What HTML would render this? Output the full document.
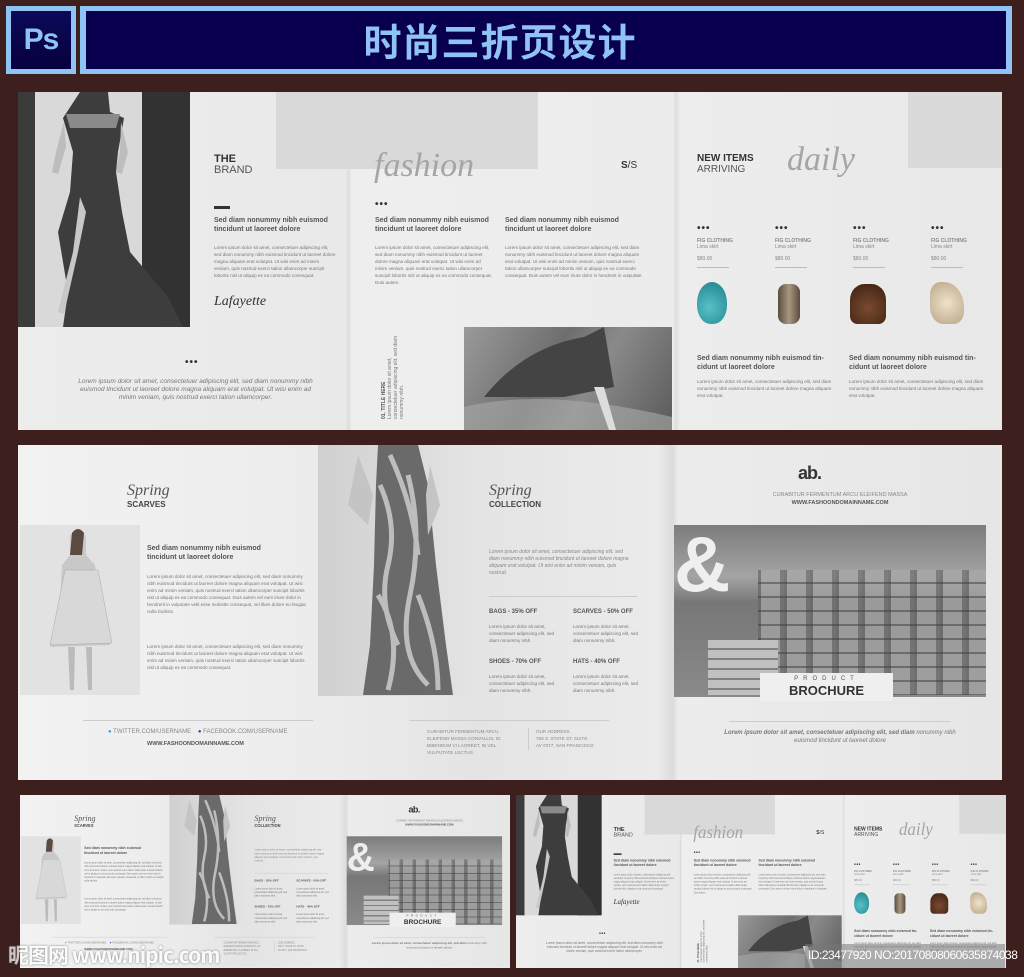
<!DOCTYPE html>
<html><head><meta charset="utf-8">
<style>
*{margin:0;padding:0;box-sizing:border-box}
body{width:1024px;height:977px;background:#3d1f1d;position:relative;overflow:hidden;font-family:"Liberation Sans","Noto Sans CJK SC",sans-serif;color:#444}
.a{position:absolute}
.sp{position:absolute;overflow:hidden}
.h{font-weight:bold;font-size:7px;line-height:9px;color:#555}
.b{font-size:4.6px;line-height:7px;color:#777}
.dots{font-size:10px;letter-spacing:1px;color:#333;font-weight:bold;line-height:6px}
.scr{font-family:"Liberation Serif",serif;font-style:italic;color:#999}
.it{font-style:italic;font-size:6.5px;line-height:8px;color:#777;text-align:center}
.sm{font-size:5px;line-height:7px;color:#888}
</style></head><body>

<div class="a" style="left:6px;top:6px;width:70px;height:68px;background:#8fc3f4;"></div>
<div class="a" style="left:11px;top:11px;width:60px;height:58px;background:linear-gradient(#0b0a5a,#08003e);color:#8fc3f4;font-weight:bold;font-size:30px;line-height:58px;text-align:center;letter-spacing:-1px">Ps</div>
<div class="a" style="left:80px;top:6px;width:932px;height:68px;background:#8fc3f4"></div>
<div class="a" style="left:86px;top:11px;width:920px;height:58px;background:#08004f;color:#8fc3f4;font-family:'Noto Sans CJK SC',sans-serif;font-weight:bold;font-size:38px;line-height:58px;text-align:center;letter-spacing:1px;padding-right:92px">时尚三折页设计</div>

<div id="s1" class="sp" style="left:18px;top:92px;width:984px;height:338px;background:linear-gradient(90deg,#ededed 0,#e9e9e9 328px,#dcdcdc 330px,#eeeeee 334px,#ececec 655px,#dedede 658px,#ededed 662px,#e8e8e8 984px)">
 <div class="a" style="left:0;top:0;width:172px;height:235px;background:#d9d9d9"></div>
 <div class="a" style="left:0;top:0;width:17px;height:235px;background:#3b3b3b"></div>
 <div class="a" style="left:124px;top:0;width:48px;height:235px;background:#323232"></div>
 <svg class="a" style="left:0;top:0" width="172" height="235" viewBox="0 0 172 235">
  <path d="M62 0 L90 0 L92 20 L106 26 L100 60 L98 80 L104 120 L112 160 L150 205 L165 235 L45 235 L50 200 L40 140 L52 100 L55 60 L45 26 Z" fill="#3d3d3d"/>
  <path d="M48 22 L102 22 L98 36 L52 36 Z" fill="#8a8a8a"/>
  <path d="M62 105 L55 160 L40 220 L46 222 L60 160 L68 120 Z" fill="#c8c8c8"/>
  <path d="M46 30 L38 60 L34 80 L40 82 L48 55 Z" fill="#bdbdbd"/>
  <path d="M103 30 L110 60 L104 82 L98 80 L102 58 Z" fill="#bdbdbd"/>
 </svg>
 <div class="a" style="left:258px;top:0;width:262px;height:77px;background:#d9d9d9"></div>
 <div class="a" style="left:196px;top:62px;font-weight:bold;font-size:11px;line-height:11px;color:#333">THE</div>
 <div class="a" style="left:196px;top:73px;font-size:11px;line-height:11px;color:#555">BRAND</div>
 <div class="a" style="left:196px;top:114px;width:16px;height:3px;background:#333"></div>
 <div class="a h" style="left:196px;top:124px;width:130px">Sed diam nonummy nibh euismod tincidunt ut laoreet dolore</div>
 <div class="a b" style="left:196px;top:152px;width:122px">Lorem ipsum dolor sit amet, consectetuer adipiscing elit, sed diam nonummy nibh euismod tincidunt ut laoreet dolore magna aliquam erat volutpat. Ut wisi enim ad minim veniam, quis nostrud exerci tation ullamcorper suscipit lobortis nisl ut aliquip ex ea commodo consequat.</div>
 <div class="a scr" style="left:196px;top:202px;font-size:14px;color:#333">Lafayette</div>
 <div class="a dots" style="left:167px;top:268px">•••</div>
 <div class="a it" style="left:55px;top:286px;width:245px">Lorem ipsum dolor sit amet, consectetuer adipiscing elit, sed diam nonummy nibh euismod tincidunt ut laoreet dolore magna aliquam erat volutpat. Ut wisi enim ad minim veniam, quis nostrud exerci tation ullamcorper.</div>

 <div class="a scr" style="left:356px;top:54px;font-size:34px;line-height:40px;color:#a5a5a5">fashion</div>
 <div class="a" style="left:603px;top:68px;font-size:10px;color:#333"><b>S</b>/S</div>
 <div class="a dots" style="left:357px;top:110px">•••</div>
 <div class="a h" style="left:357px;top:124px;width:128px">Sed diam nonummy nibh euismod tincidunt ut laoreet dolore</div>
 <div class="a h" style="left:487px;top:124px;width:128px">Sed diam nonummy nibh euismod tincidunt ut laoreet dolore</div>
 <div class="a b" style="left:357px;top:152px;width:118px">Lorem ipsum dolor sit amet, consectetuer adipiscing elit, sed diam nonummy nibh euismod tincidunt ut laoreet dolore magna aliquam erat volutpat. Ut wisi enim ad minim veniam, quis nostrud exerci tation ullamcorper suscipit lobortis nisl ut aliquip ex ea commodo consequat. Duis autem.</div>
 <div class="a b" style="left:487px;top:152px;width:140px">Lorem ipsum dolor sit amet, consectetuer adipiscing elit, sed diam nonummy nibh euismod tincidunt ut laoreet dolore magna aliquam erat volutpat. Ut wisi enim ad minim veniam, quis nostrud exerci tation ullamcorper suscipit lobortis nisl ut aliquip ex ea commodo consequat. Duis autem vel eum iriure dolor in hendrerit in vulputate.</div>
 <div class="a" style="left:330px;top:270px;width:90px;transform:rotate(-90deg);transform-origin:center;font-size:5px;line-height:6px;color:#777"><b style="color:#555">01. TITLE HERE</b><br>Lorem ipsum dolor sit amet, consectetuer adipiscing elit, sed diam nonummy nibh.</div>
 <div class="a" style="left:446px;top:235px;width:208px;height:103px;background:linear-gradient(120deg,#9a9a9a,#6e6e6e 40%,#8a8a8a 60%,#5a5a5a)"></div>
 <svg class="a" style="left:446px;top:235px" width="208" height="103"><path d="M20 70 Q60 20 120 10 L140 0 L150 60 L100 70 Z" fill="#444"/><path d="M0 80 Q80 60 208 90 L208 103 L0 103Z" fill="#aaa" opacity=".6"/><path d="M130 60 L145 103 L152 103 L140 60Z" fill="#ddd"/></svg>

 <div class="a" style="left:890px;top:0;width:94px;height:76px;background:#dadada"></div>
 <div class="a" style="left:679px;top:62px;font-weight:bold;font-size:10px;line-height:10px;color:#333">NEW ITEMS</div>
 <div class="a" style="left:679px;top:73px;font-size:10px;line-height:10px;color:#555">ARRIVING</div>
 <div class="a scr" style="left:769px;top:48px;font-size:34px;line-height:40px;color:#a5a5a5">daily</div>
 <div class="a" style="left:679px;top:134px;width:305px">
  <div class="a dots" style="left:0">•••</div><div class="a dots" style="left:78px">•••</div><div class="a dots" style="left:156px">•••</div><div class="a dots" style="left:234px">•••</div>
 </div>
 <div class="a sm" style="left:679px;top:146px;line-height:6px"><b>FIG CLOTHING</b><br>Lima skirt<br><br>$80.00</div>
 <div class="a sm" style="left:757px;top:146px;line-height:6px"><b>FIG CLOTHING</b><br>Lima skirt<br><br>$80.00</div>
 <div class="a sm" style="left:835px;top:146px;line-height:6px"><b>FIG CLOTHING</b><br>Lima skirt<br><br>$80.00</div>
 <div class="a sm" style="left:913px;top:146px;line-height:6px"><b>FIG CLOTHING</b><br>Lima skirt<br><br>$80.00</div>
 <div class="a" style="left:679px;top:175px;width:32px;height:1px;background:#bbb"></div>
 <div class="a" style="left:757px;top:175px;width:32px;height:1px;background:#bbb"></div>
 <div class="a" style="left:835px;top:175px;width:32px;height:1px;background:#bbb"></div>
 <div class="a" style="left:913px;top:175px;width:32px;height:1px;background:#bbb"></div>
 <div class="a" style="left:679px;top:190px;width:30px;height:42px;border-radius:50% 50% 45% 45%;background:radial-gradient(circle at 40% 60%,#5ac0c8,#1a7f88)"></div>
 <div class="a" style="left:760px;top:192px;width:22px;height:40px;border-radius:8px;background:linear-gradient(90deg,#5a4c40,#a89880 50%,#5a4c40)"></div>
 <div class="a" style="left:832px;top:192px;width:36px;height:40px;border-radius:40% 40% 20% 20%;background:radial-gradient(circle at 50% 60%,#7a4a30,#3a2010)"></div>
 <div class="a" style="left:912px;top:190px;width:34px;height:42px;border-radius:30% 60% 30% 40%;background:radial-gradient(circle at 50% 50%,#f0e2c8,#b8a588)"></div>
 <div class="a h" style="left:679px;top:262px;width:145px">Sed diam nonummy nibh euismod tin-cidunt ut laoreet dolore</div>
 <div class="a h" style="left:831px;top:262px;width:145px">Sed diam nonummy nibh euismod tin-cidunt ut laoreet dolore</div>
 <div class="a b" style="left:679px;top:286px;width:140px">Lorem ipsum dolor sit amet, consectetuer adipiscing elit, sed diam nonummy nibh euismod tincidunt ut laoreet dolore magna aliquam erat volutpat.</div>
 <div class="a b" style="left:831px;top:286px;width:140px">Lorem ipsum dolor sit amet, consectetuer adipiscing elit, sed diam nonummy nibh euismod tincidunt ut laoreet dolore magna aliquam erat volutpat.</div>
</div>

<div id="s2" class="sp" style="left:18px;top:445px;width:984px;height:335px;background:linear-gradient(90deg,#f2f2f2 0,#ececec 300px,#e4e4e4 457px,#ebebeb 640px,#dcdcdc 655px,#ececec 660px,#e6e6e6 984px)">
 <div class="a" style="left:2px;top:80px;width:120px;height:170px;background:#e2e2e2"></div>
 <svg class="a" style="left:2px;top:80px" width="120" height="170"><path d="M50 10 Q60 0 66 12 L66 30 L75 40 L80 80 L90 120 L30 122 L40 80 L42 40 L50 30Z" fill="#c8c8c8"/><path d="M45 45 L78 45 L92 118 L30 120 Z" fill="#d8d8d8" stroke="#aaa" stroke-width=".5"/><path d="M52 8 Q58 0 64 8 L62 30 L50 30Z" fill="#5a4a42"/><path d="M48 122 L50 165 L54 165 L55 122Z M66 122 L68 165 L72 165 L72 122Z" fill="#bbb"/></svg>
 <div class="a scr" style="left:109px;top:38px;font-size:16px;line-height:16px;color:#555">Spring</div>
 <div class="a" style="left:109px;top:55px;font-size:8px;font-weight:bold;color:#444">SCARVES</div>
 <div class="a h" style="left:129px;top:99px;width:140px">Sed diam nonummy nibh euismod tincidunt ut laoreet dolore</div>
 <div class="a b" style="left:129px;top:128px;width:160px">Lorem ipsum dolor sit amet, consectetuer adipiscing elit, sed diam nonummy nibh euismod tincidunt ut laoreet dolore magna aliquam erat volutpat. Ut wisi enim ad minim veniam, quis nostrud exerci tation ullamcorper suscipit lobortis nisl ut aliquip ex ea commodo consequat. Duis autem vel eum iriure dolor in hendrerit in vulputate velit esse molestie consequat, vel illum dolore eu feugiat nulla facilisis.</div>
 <div class="a b" style="left:129px;top:198px;width:160px">Lorem ipsum dolor sit amet, consectetuer adipiscing elit, sed diam nonummy nibh euismod tincidunt ut laoreet dolore magna aliquam erat volutpat. Ut wisi enim ad minim veniam, quis nostrud exerci tation ullamcorper suscipit lobortis nisl ut aliquip ex ea commodo consequat.</div>
 <div class="a" style="left:65px;top:275px;width:230px;height:1px;background:#ccc"></div>
 <div class="a sm" style="left:90px;top:284px;font-size:6px"><span style="color:#29a9e0">●</span> TWITTER.COM/USERNAME &nbsp;&nbsp;&nbsp;<span style="color:#2b4f9a">●</span> FACEBOOK.COM/USERNAME</div>
 <div class="a" style="left:129px;top:296px;font-size:5.5px;font-weight:bold;color:#555">WWW.FASHOONDOMAINNAME.COM</div>

 <div class="a" style="left:300px;top:0;width:157px;height:251px;background:linear-gradient(90deg,#d0d0d0,#e4e4e4)"></div>
 <svg class="a" style="left:300px;top:0" width="157" height="251"><path d="M60 0 L100 0 L110 40 L118 120 L128 200 L135 250 L45 250 L52 200 L56 120 L58 40Z" fill="#6a6a6a"/><path d="M62 40 Q80 80 70 120 T80 200 M90 30 Q105 90 92 150 T110 240 M72 10 Q95 60 100 110 M60 150 Q85 190 70 245 M100 150 Q120 200 120 245" stroke="#bdbdbd" stroke-width="5" fill="none"/><path d="M40 10 L30 60 L50 80 L55 50Z M112 20 L122 60 L110 90 L108 50Z" fill="#c4c4c4"/></svg>
 <div class="a scr" style="left:471px;top:38px;font-size:16px;line-height:16px;color:#555">Spring</div>
 <div class="a" style="left:471px;top:55px;font-size:8px;font-weight:bold;color:#444">COLLECTION</div>
 <div class="a" style="left:471px;top:104px;width:145px;font-style:italic;font-size:5px;line-height:7px;color:#888">Lorem ipsum dolor sit amet, consectetuer adipiscing elit, sed diam nonummy nibh euismod tincidunt ut laoreet dolore magna aliquam erat volutpat. Ut wisi enim ad minim veniam, quis nostrud.</div>
 <div class="a" style="left:471px;top:151px;width:148px;height:1px;background:#ccc"></div>
 <div class="a h" style="left:471px;top:163px;font-size:6px">BAGS - 35% OFF</div>
 <div class="a h" style="left:555px;top:163px;font-size:6px">SCARVES - 50% OFF</div>
 <div class="a b" style="left:471px;top:178px;width:75px">Lorem ipsum dolor sit amet, consectetuer adipiscing elit, sed diam nonummy nibh.</div>
 <div class="a b" style="left:555px;top:178px;width:68px">Lorem ipsum dolor sit amet, consectetuer adipiscing elit, sed diam nonummy nibh.</div>
 <div class="a h" style="left:471px;top:213px;font-size:6px">SHOES - 70% OFF</div>
 <div class="a h" style="left:555px;top:213px;font-size:6px">HATS - 40% OFF</div>
 <div class="a b" style="left:471px;top:228px;width:75px">Lorem ipsum dolor sit amet, consectetuer adipiscing elit, sed diam nonummy nibh.</div>
 <div class="a b" style="left:555px;top:228px;width:68px">Lorem ipsum dolor sit amet, consectetuer adipiscing elit, sed diam nonummy nibh.</div>
 <div class="a" style="left:391px;top:275px;width:200px;height:1px;background:#ccc"></div>
 <div class="a sm" style="left:409px;top:283px;width:95px;font-size:4.6px;line-height:7px">CURABITUR FERMENTUM ARCU ELEIFEND MASSA CONVALLIS, ID BIBENDUM VI LAOREET, IN VEL VULPUTATE LECTUS.</div>
 <div class="a" style="left:510px;top:283px;width:1px;height:22px;background:#ccc"></div>
 <div class="a sm" style="left:518px;top:283px;font-size:4.6px;line-height:7px">OUR ADDRESS.<br>766 S. STATE ST. SUITE<br>AV #377, SAN FRANCISCO</div>

 <div class="a" style="left:780px;top:18px;font-size:18px;font-weight:bold;color:#333;letter-spacing:-1px">ab.</div>
 <div class="a sm" style="left:712px;top:46px;width:220px;text-align:center;font-size:5.5px;line-height:8px">CURABITUR FERMENTUM ARCU ELEIFEND MASSA<br><b style="color:#555">WWW.FASHOONDOMAINNAME.COM</b></div>
 <div class="a" style="left:656px;top:80px;width:312px;height:172px;background:linear-gradient(180deg,#7c7c7c 0,#a4a4a4 30%,#777 45%,#8a8a8a 100%)"></div>
 <div class="a" style="left:740px;top:125px;width:228px;height:125px;background:repeating-linear-gradient(90deg,#666 0 3px,#a8a8a8 3px 22px,#6e6e6e 22px 26px);opacity:.7"></div>
 <div class="a" style="left:740px;top:125px;width:228px;height:125px;background:repeating-linear-gradient(180deg,transparent 0 12px,rgba(60,60,60,.5) 12px 14px)"></div>
 <div class="a" style="left:690px;top:195px;width:70px;height:55px;background:repeating-linear-gradient(180deg,#c0c0c0 0 8px,#808080 8px 10px)"></div>
 <div class="a" style="left:656px;top:74px;font-size:78px;font-weight:bold;color:#efefef;line-height:90px">&amp;</div>
 <div class="a" style="left:742px;top:228px;width:133px;height:28px;background:#efefef;text-align:center">
  <div style="font-size:6px;letter-spacing:5px;color:#555;line-height:9px;padding-top:2px">PRODUCT</div>
  <div style="font-size:13px;font-weight:bold;color:#333;line-height:14px">BROCHURE</div>
 </div>
 <div class="a" style="left:711px;top:276px;width:222px;height:1px;background:#ccc"></div>
 <div class="a it" style="left:700px;top:284px;width:244px;font-size:6px;line-height:8px"><b>Lorem ipsum dolor sit amet, consectetuer adipiscing elit, sed diam</b> nonummy nibh euismod tincidunt ut laoreet dolore</div>
</div>

<div class="a" style="left:20px;top:795px;width:490px;height:173px;overflow:hidden;background:#fff">
 <div id="c2" style="position:absolute;left:0;top:0;transform-origin:0 0;transform:scale(0.498,0.516)"></div>
</div>
<div class="a" style="left:516px;top:795px;width:490px;height:173px;overflow:hidden;background:#fff">
 <div id="c1" style="position:absolute;left:0;top:0;transform-origin:0 0;transform:scale(0.498,0.512)"></div>
</div>
<div class="a" style="left:8px;top:940px;font-size:21px;font-weight:bold;color:#fff;opacity:.75;font-family:'Noto Sans CJK SC',sans-serif;letter-spacing:-1px;text-shadow:0 0 2px #555">昵图网 www.nipic.com</div>
<div class="a" style="left:805px;top:944px;width:200px;height:24px;background:rgba(120,120,120,.55)"></div>
<div class="a" style="left:808px;top:948px;font-size:12px;color:#fff;letter-spacing:-.5px">ID:23477920 NO:20170808060635874038</div>
<div class="a" style="left:0;top:970px;width:1024px;height:7px;background:#3d1f1d"></div>

<script>
function cp(src,dst){var s=document.getElementById(src).cloneNode(true);s.removeAttribute('id');s.style.left='0';s.style.top='0';document.getElementById(dst).appendChild(s);}
cp('s2','c2');cp('s1','c1');
</script>
</body></html>
